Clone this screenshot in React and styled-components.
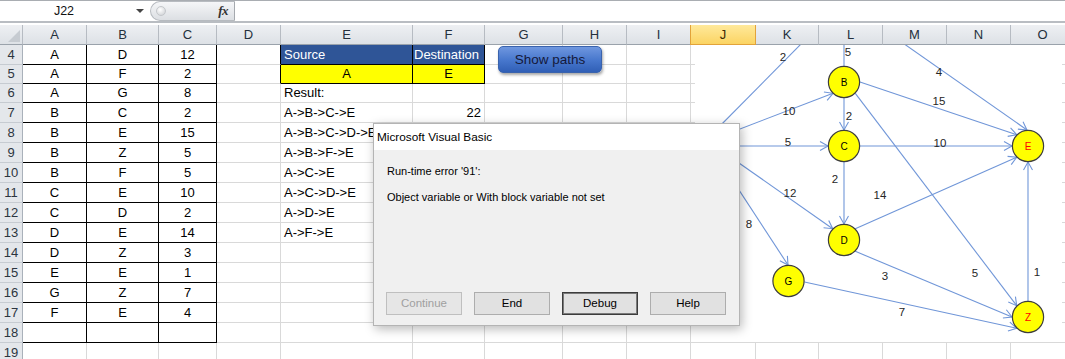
import React from 'react';
import styled, { createGlobalStyle } from 'styled-components';

const GlobalStyle = createGlobalStyle`
  html, body { margin: 0; padding: 0; background: #fff; overflow: hidden; }
  body { font-family: "Liberation Sans", Arial, sans-serif; }
  * { box-sizing: border-box; }
`;

const COLS = [
  ['', 23], ['A', 64], ['B', 72], ['C', 58], ['D', 64], ['E', 132], ['F', 72], ['G', 78],
  ['H', 64], ['I', 64], ['J', 65], ['K', 63], ['L', 64], ['M', 64], ['N', 64], ['O', 64],
];
const TEMPLATE = COLS.map(([, w]) => `${w}px`).join(' ');
const GRID = '#d9d9d9';

const Page = styled.div`
  position: relative;
  width: 1065px;
  height: 359px;
  overflow: hidden;
  background: #fff;
`;

const FormulaBar = styled.div`
  display: flex;
  height: 23px;
  border-top: 1px solid #a9adb2;
  border-bottom: 2px solid #b9bdc2;
  margin-bottom: 2px;
  background: #fff;
`;

const NameBox = styled.div`
  display: flex;
  align-items: center;
  width: 150px;
  font-size: 12.5px;
  color: #111;
`;

const NameText = styled.span`
  width: 128px;
  text-align: center;
`;

const DropArrow = styled.span`
  width: 0;
  height: 0;
  margin-left: 8px;
  border-left: 4px solid transparent;
  border-right: 4px solid transparent;
  border-top: 4px solid #444;
`;

const FxPill = styled.div`
  display: flex;
  align-items: center;
  justify-content: space-between;
  width: 85px;
  padding: 0 6px 0 5px;
  border: 1px solid #b7bbc0;
  border-right-color: #a5a9ae;
  border-radius: 11px 0 0 11px;
  background: linear-gradient(#f5f6f8, #dcdfe3);
`;

const Dot = styled.span`
  width: 10px;
  height: 10px;
  border-radius: 50%;
  background: radial-gradient(circle at 40% 35%, #ffffff, #c9ccd0);
  border: 1px solid #c4c7cb;
`;

const Fx = styled.span`
  font-family: "Liberation Serif", "DejaVu Serif", serif;
  font-style: italic;
  font-weight: bold;
  font-size: 13px;
  color: #333;
  letter-spacing: -0.5px;
`;

const FormulaInput = styled.div`
  flex: 1;
  background: #fff;
`;

const Row = styled.div`
  display: grid;
  grid-template-columns: ${TEMPLATE};
  height: ${(p) => p.$h}px;
  line-height: ${(p) => p.$h - 1}px;
  font-size: 13px;
`;

const HeadCell = styled.div`
  text-align: center;
  color: ${(p) => (p.$sel ? '#3d2a05' : '#24303c')};
  background: ${(p) => (p.$sel ? 'linear-gradient(#ffe99b, #fbd463)' : 'linear-gradient(#eef0f3, #dde1e6)')};
  border-right: 1px solid ${(p) => (p.$sel ? '#e2a33a' : '#b6bbc2')};
  border-bottom: 1px solid ${(p) => (p.$sel ? '#e2a33a' : '#9aa2ab')};
  ${(p) => (p.$sel ? 'border-left: 1px solid #e2a33a; margin-left: -1px;' : '')}
`;

const Corner = styled.div`
  position: relative;
  background: linear-gradient(#eef0f3, #dde1e6);
  border-right: 1px solid #b6bbc2;
  border-bottom: 1px solid #9aa2ab;
  &::after {
    content: '';
    position: absolute;
    right: 2px;
    bottom: 2px;
    width: 0;
    height: 0;
    border-left: 12px solid transparent;
    border-bottom: 12px solid #c6cbd1;
  }
`;

const RowNum = styled.div`
  text-align: center;
  color: #2c3540;
  background: #e4e7eb;
  border-right: 1px solid #a9b1ba;
  border-bottom: 1px solid #c6cbd1;
`;

const Cell = styled.div`
  padding: 0 3px;
  white-space: nowrap;
  overflow: hidden;
  color: ${(p) => p.$color || '#000'};
  background: ${(p) => p.$bg || '#fff'};
  text-align: ${(p) => p.$align || 'left'};
  border-right: 1px solid ${(p) => p.$rb || GRID};
  border-bottom: 1px solid ${(p) => p.$bb || GRID};
`;

const Graph = styled.svg`
  position: absolute;
  left: 695px;
  top: 45px;
  width: 367px;
  height: 297px;
  display: block;
`;

const ShowPaths = styled.button`
  position: absolute;
  left: 498px;
  top: 46px;
  width: 104px;
  height: 27px;
  border: 1px solid #3a63ad;
  border-radius: 5px;
  background: linear-gradient(#6f97df, #4676cc 55%, #305fb6);
  box-shadow: 1px 2px 3px rgba(0, 0, 0, 0.35);
  color: #15193a;
  font-family: "Liberation Sans", Arial, sans-serif;
  font-size: 13.5px;
  padding: 0;
`;

const Dialog = styled.div`
  position: absolute;
  left: 373px;
  top: 123px;
  width: 367px;
  height: 203px;
  display: flex;
  flex-direction: column;
  background: #f0f0f0;
  border: 1px solid #b4b4b4;
  box-shadow: 2px 3px 10px rgba(0, 0, 0, 0.28);
  font-size: 11px;
  color: #000;
`;

const TitleBar = styled.div`
  height: 26px;
  padding-left: 3px;
  line-height: 26px;
  background: #fff;
  font-size: 11.8px;
`;

const Body = styled.div`
  flex: 1;
  display: flex;
  flex-direction: column;
  padding: 13px 11px 10px 12px;
`;

const Message = styled.div`
  line-height: 16px;
  padding-left: 1px;
  margin-bottom: 10px;
`;

const ButtonRow = styled.div`
  margin-top: auto;
  display: flex;
  gap: 12px;
`;

const DlgButton = styled.div`
  width: 76px;
  height: 23px;
  line-height: 21px;
  text-align: center;
  border: 1px solid ${(p) => (p.$default ? '#3c3c3c' : p.$disabled ? '#bfbfbf' : '#adadad')};
  box-shadow: ${(p) => (p.$default ? 'inset 0 0 0 1px #7a7a7a' : 'none')};
  color: ${(p) => (p.$disabled ? '#a0a0a0' : '#000')};
  background: ${(p) => (p.$disabled ? '#e6e6e6' : '#e1e1e1')};
  font-size: 11.5px;
`;

const tableRows = [
  ['A', 'D', '12'], ['A', 'F', '2'], ['A', 'G', '8'], ['B', 'C', '2'], ['B', 'E', '15'],
  ['B', 'Z', '5'], ['B', 'F', '5'], ['C', 'E', '10'], ['C', 'D', '2'], ['D', 'E', '14'],
  ['D', 'Z', '3'], ['E', 'E', '1'], ['G', 'Z', '7'], ['F', 'E', '4'], ['', '', ''],
];
const paths = ['A->B->C->E', 'A->B->C->D->E', 'A->B->F->E', 'A->C->E', 'A->C->D->E', 'A->D->E', 'A->F->E'];

const rowHeights = { 4: 20, 5: 19, 6: 19 };

function efCells(r) {
  if (r === 4) {
    return [
      <Cell key="E" $bg="#2f5597" $color="#fff" $rb="#000" $bb="#000">Source</Cell>,
      <Cell key="F" $bg="#2f5597" $color="#fff" $rb="#000" $bb="#000" style={{ paddingLeft: 1, paddingRight: 0 }}>Destination</Cell>,
    ];
  }
  if (r === 5) {
    return [
      <Cell key="E" $bg="#ffff00" $align="center" $rb="#000" $bb="#000">A</Cell>,
      <Cell key="F" $bg="#ffff00" $align="center" $rb="#000" $bb="#000">E</Cell>,
    ];
  }
  if (r === 6) return [<Cell key="E">Result:</Cell>, <Cell key="F" />];
  if (r >= 7 && r <= 13) {
    return [
      <Cell key="E">{paths[r - 7]}</Cell>,
      <Cell key="F" $align="right">{r === 7 ? '22' : ''}</Cell>,
    ];
  }
  return [<Cell key="E" />, <Cell key="F" />];
}

function SheetRow({ r }) {
  const h = rowHeights[r] || 20;
  const t = tableRows[r - 4];
  const inTable = !!t;
  const blackBox = r === 4 || r === 5;
  const rest = [];
  for (let i = 7; i < COLS.length; i++) rest.push(<Cell key={COLS[i][0]} />);
  return (
    <Row $h={h}>
      <RowNum>{r}</RowNum>
      {inTable ? (
        <>
          <Cell $align="center" $rb="#000" $bb="#000">{t[0]}</Cell>
          <Cell $align="center" $rb="#000" $bb="#000">{t[1]}</Cell>
          <Cell $align="center" $rb="#000" $bb="#000">{t[2]}</Cell>
        </>
      ) : (
        <>
          <Cell />
          <Cell />
          <Cell />
        </>
      )}
      <Cell $rb={blackBox ? '#000' : undefined} />
      {efCells(r)}
      {rest}
    </Row>
  );
}

const LINE = '#7096d8';
const edges = [
  [712, 134, 803, 42, false],
  [725, 134.7, 833, 93.3, true],
  [725, 146, 828, 146, true],
  [725, 153.2, 832.7, 228.7, true],
  [725, 168.6, 788, 265, true],
  [844, 40, 844, 66, false],
  [900, 41, 1027, 130, true],
  [860, 82, 1016.7, 134.7, true],
  [844, 98, 844, 130, true],
  [860, 146, 1012, 146, true],
  [844, 162, 844, 224, true],
  [855.3, 228.7, 1016.7, 157.3, true],
  [855.3, 93.3, 1016.7, 305.7, true],
  [855.3, 251.3, 1012, 317, true],
  [804.5, 282, 1016.7, 328.3, true],
  [1028, 301, 1028, 162, true],
];
const labels = [
  [783, 57, '2'], [848, 52, '5'], [939, 72, '4'], [939, 101, '15'], [789, 111, '10'],
  [849, 116, '2'], [788, 142, '5'], [940, 143, '10'], [835, 179, '2'], [880, 195, '14'],
  [790, 193, '12'], [749, 224, '8'], [885, 276, '3'], [975, 273, '5'], [1037, 272, '1'],
  [902, 312, '7'],
];
const nodes = [
  [844, 82, 'B', '#000'], [844, 146, 'C', '#000'], [1028, 146, 'E', '#ff0000'],
  [844, 240, 'D', '#000'], [788.5, 281, 'G', '#000'], [1028, 317, 'Z', '#ff0000'],
];

function PathGraph() {
  return (
    <Graph viewBox="695 45 367 297">
      <defs>
        <marker id="arrow" markerUnits="userSpaceOnUse" markerWidth="12" markerHeight="12" refX="10" refY="6" orient="auto">
          <path d="M2,1.5 L10,6 L2,10.5" fill="none" stroke={LINE} strokeWidth="1.1" />
        </marker>
      </defs>
      <rect x="695" y="45" width="367" height="297" fill="#fff" />
      {edges.map(([x1, y1, x2, y2, a], i) => (
        <line key={i} x1={x1} y1={y1} x2={x2} y2={y2} stroke={LINE} strokeWidth="1.1" markerEnd={a ? 'url(#arrow)' : undefined} />
      ))}
      {labels.map(([x, y, t], i) => (
        <text key={i} x={x} y={y + 4} textAnchor="middle" fontSize="11.5" fill="#262626" fontFamily="Liberation Sans, Arial, sans-serif">{t}</text>
      ))}
      {nodes.map(([x, y, t, c]) => (
        <g key={t}>
          <circle cx={x} cy={y} r="15.6" fill="#ffff00" stroke="#3d3d3d" strokeWidth="1.2" />
          <text x={x} y={y + 3.5} textAnchor="middle" fontSize="10" fill={c} fontFamily="Liberation Sans, Arial, sans-serif">{t}</text>
        </g>
      ))}
    </Graph>
  );
}

export default function App() {
  const rows = [];
  for (let r = 4; r <= 19; r++) rows.push(<SheetRow key={r} r={r} />);
  return (
    <Page>
      <GlobalStyle />
      <FormulaBar>
        <NameBox>
          <NameText>J22</NameText>
          <DropArrow />
        </NameBox>
        <FxPill>
          <Dot />
          <Fx>fx</Fx>
        </FxPill>
        <FormulaInput />
      </FormulaBar>
      <Row $h={20}>
        <Corner />
        {COLS.slice(1).map(([k]) => (
          <HeadCell key={k} $sel={k === 'J'}>{k}</HeadCell>
        ))}
      </Row>
      {rows}
      <PathGraph />
      <ShowPaths>Show paths</ShowPaths>
      <Dialog>
        <TitleBar>Microsoft Visual Basic</TitleBar>
        <Body>
          <Message>Run-time error '91':</Message>
          <Message>Object variable or With block variable not set</Message>
          <ButtonRow>
            <DlgButton $disabled>Continue</DlgButton>
            <DlgButton>End</DlgButton>
            <DlgButton $default>Debug</DlgButton>
            <DlgButton>Help</DlgButton>
          </ButtonRow>
        </Body>
      </Dialog>
    </Page>
  );
}
